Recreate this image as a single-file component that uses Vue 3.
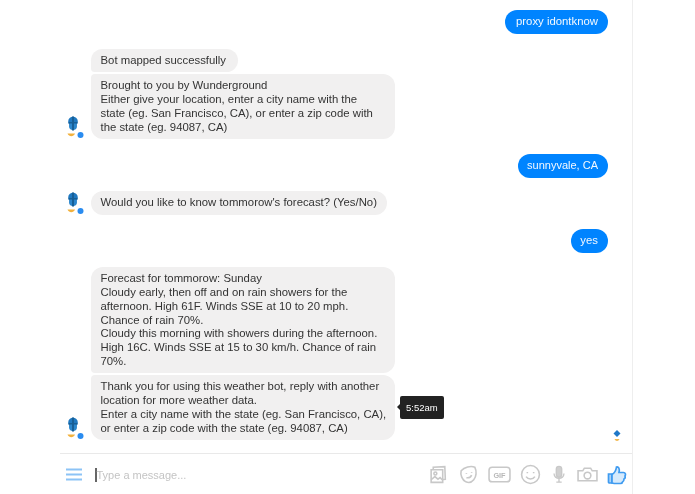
<template>
  <div class="messenger">
    <div class="chat">
      <div class="messages">
        <div class="row row-me">
          <div class="bubble me proxy">proxy idontknow</div>
        </div>

        <div class="row row-bot gap-first">
          <div class="avatar">
            <svg viewBox="0 0 20 24" class="bot-icon"><use href="#botmark" /></svg>
          </div>
          <div class="group">
            <div class="bubble bot top mapped">Bot mapped successfully</div>
            <div class="bubble bot bottom wide">
              Brought to you by Wunderground<br />
              Either give your location, enter a city name with the<br />
              state (eg. San Francisco, CA), or enter a zip code with<br />
              the state (eg. 94087, CA)
            </div>
          </div>
        </div>

        <div class="row row-me gap-sunny">
          <div class="bubble me small">sunnyvale, CA</div>
        </div>

        <div class="row row-bot gap-would">
          <div class="avatar">
            <svg viewBox="0 0 20 24" class="bot-icon"><use href="#botmark" /></svg>
          </div>
          <div class="bubble bot">Would you like to know tommorow's forecast? (Yes/No)</div>
        </div>

        <div class="row row-me gap-reply">
          <div class="bubble me">yes</div>
        </div>

        <div class="row row-bot gap-reply">
          <div class="avatar">
            <svg viewBox="0 0 20 24" class="bot-icon"><use href="#botmark" /></svg>
          </div>
          <div class="group">
            <div class="bubble bot top wide">
              Forecast for tommorow: Sunday<br />
              Cloudy early, then off and on rain showers for the<br />
              afternoon. High 61F. Winds SSE at 10 to 20 mph.<br />
              Chance of rain 70%.<br />
              Cloudy this morning with showers during the afternoon.<br />
              High 16C. Winds SSE at 15 to 30 km/h. Chance of rain<br />
              70%.
            </div>
            <div class="last-line">
              <div class="bubble bot bottom wide">
                Thank you for using this weather bot, reply with another<br />
                location for more weather data.<br />
                Enter a city name with the state (eg. San Francisco, CA),<br />
                or enter a zip code with the state (eg. 94087, CA)
              </div>
              <div class="tooltip">5:52am</div>
            </div>
          </div>
          <svg viewBox="0 0 10 14" class="seen">
            <path d="M5 1l3.500 3.500L5 8 1.500 4.500z" fill="#1f78c8" />
            <path d="M2.500 10c1 2.500 4 2.500 5 0z" fill="#f2b84d" />
          </svg>
        </div>
      </div>

      <div class="composer">
        <svg class="menu" viewBox="0 0 16 13">
          <path d="M0 1.500h16M0 6.500h16M0 11.500h16" stroke="#8cc3f6" stroke-width="1.900" fill="none" />
        </svg>
        <div class="input"><span class="caret"></span>Type a message...</div>
        <div class="tools">
          <svg viewBox="0 0 20 20" class="tool">
            <path d="M5 5.500V3l11-.5.500 12-2 .3M3 5.500h11v12H3z" />
            <circle cx="7" cy="9" r="1.400" />
            <path d="M3 15l3.500-3 3 2.500 2-1.500 2.500 2.500" />
          </svg>
          <svg viewBox="0 0 20 20" class="tool">
            <path d="M3 6.500C6 3 12 1.500 16 3c2 4 1.500 9-1 12-2 2.500-5 3-7.500 2C4 15.500 2 10 3 6.500z" />
            <path d="M8 8.500v.8M13 7.500v.8M8 13c2 .5 4-.5 5-2.500" />
          </svg>
          <svg viewBox="0 0 22 20" class="tool tool-gif">
            <rect x="1" y="3" width="20" height="14" rx="3" />
            <text x="11" y="13" text-anchor="middle">GIF</text>
          </svg>
          <svg viewBox="0 0 20 20" class="tool">
            <circle cx="10" cy="10" r="8.500" />
            <path d="M7 7.500v1.200M13 7.500v1.200M5.800 12c2 3 6.400 3 8.400 0" />
          </svg>
          <svg viewBox="0 0 20 20" class="tool tool-mic">
            <rect x="7" y="1" width="6" height="12" rx="3" fill="#d0d0d0" />
            <path d="M4.500 9c0 7 11 7 11 0M10 15v3.500M7 18.500h6" />
          </svg>
          <svg viewBox="0 0 20 20" class="tool">
            <path d="M1 6.500h4.500L7 4h6l1.500 2.500H19V16H1z" />
            <circle cx="10" cy="11" r="3.200" />
          </svg>
          <svg viewBox="0 0 20 20" class="thumb">
            <path d="M1.500 9h3.500v9H2.500a1 1 0 0 1-1-1z" fill="#a9d3f9" />
            <path d="M5 9.500c2.500-1.500 4-4 4.500-7.500 2-.5 3.500 1.500 2.500 5.500h4.500c2 0 2.500 2 1.500 3.500.5 1.500 0 2.500-1 3 0 1.500-.5 2.500-1.500 3-.2 1-1 1.500-2 1.500H8c-1.500 0-2-.5-3-.5z" />
          </svg>
        </div>
      </div>
    </div>

    <svg class="defs" width="0" height="0">
      <symbol id="botmark" viewBox="0 0 20 24">
        <circle cx="9" cy="6.500" r="4.800" fill="#1f78c0" />
        <circle cx="9" cy="11" r="4" fill="#2b86cc" />
        <rect x="8" y="1.500" width="2" height="14" fill="#175f96" />
        <rect x="4.500" y="7" width="9" height="1.500" fill="#175f96" />
        <path d="M3.500 18.500c1.500 3.500 6 3.500 7.500 0z" fill="#f2b13d" />
        <circle cx="16.500" cy="20" r="3" fill="#2a8cf0" />
      </symbol>
    </svg>
  </div>
</template>

<script setup>
// static screen, nothing to do here
</script>

<style>
html,
body {
  margin: 0;
  background: #fff;
}
</style>

<style scoped>
.messenger {
  width: 695px;
  height: 494px;
  overflow: hidden;
  background: #fff;
  font-family: "Liberation Sans", Arial, sans-serif;
  filter: blur(0.55px);
}

.chat {
  width: 632px;
  height: 494px;
  border-right: 1px solid #eeeeee;
  display: flex;
  flex-direction: column;
}

.messages {
  flex: 1;
  padding: 10px 24px 0 64px;
}

.row {
  display: flex;
  position: relative;
}

.row-me {
  justify-content: flex-end;
}

.row-bot {
  align-items: flex-end;
}

.gap-first {
  margin-top: 14.6px;
}

.gap-sunny {
  margin-top: 15px;
}

.gap-would {
  margin-top: 13px;
}

.gap-reply {
  margin-top: 14px;
}

.avatar {
  width: 27px;
  height: 24px;
  flex: none;
}

.bot-icon {
  width: 20px;
  height: 24px;
  display: block;
}

.group {
  display: flex;
  flex-direction: column;
  align-items: flex-start;
  gap: 2px;
}

.bubble {
  font-size: 11.35px;
  line-height: 13.9px;
  padding: 5px 10px 5px 9.5px;
  border-radius: 12px;
  box-sizing: border-box;
  white-space: nowrap;
}

.me {
  background: #0084ff;
  color: #f2f8ff;
}

.proxy {
  padding-left: 11px;
}

.small {
  font-size: 11px;
}

.bot {
  background: #f1f0f0;
  color: #333;
}

.mapped {
  padding-right: 12px;
}

.top {
  border-bottom-left-radius: 4px;
}

.bottom {
  border-top-left-radius: 4px;
}

.wide {
  width: 304px;
  padding-top: 5px;
  padding-bottom: 4px;
}

.last-line {
  display: flex;
  align-items: center;
}

.tooltip {
  background: #222;
  color: #fff;
  font-size: 9.5px;
  line-height: 12px;
  padding: 5.5px 6px;
  border-radius: 2px;
  margin-left: 5px;
  position: relative;
}

.tooltip::before {
  content: "";
  position: absolute;
  left: -3px;
  top: 8px;
  border-top: 3px solid transparent;
  border-bottom: 3px solid transparent;
  border-right: 3px solid #222;
}

.seen {
  position: absolute;
  right: -14px;
  bottom: -3px;
  width: 10px;
  height: 14px;
}

.composer {
  height: 41px;
  margin-left: 60px;
  border-top: 1px solid #e9e9e9;
  display: flex;
  align-items: center;
  padding: 1px 0 0 6px;
  box-sizing: border-box;
}

.menu {
  width: 16px;
  height: 13px;
  flex: none;
}

.input {
  flex: 1;
  margin-left: 13px;
  display: flex;
  align-items: center;
  font-size: 11px;
  color: #c4c4c4;
}

.caret {
  width: 1.5px;
  height: 14px;
  background: #666;
}

.tools {
  display: flex;
  align-items: center;
  gap: 9px;
  margin-right: 5px;
}

.tool {
  width: 21px;
  height: 21px;
  fill: none;
  stroke: #c8c8c8;
  stroke-width: 1.5;
}

.tool-gif {
  width: 23px;
}

.tool-mic {
  width: 18px;
}

.tool-gif text {
  font-size: 7px;
  font-weight: bold;
  fill: #b8b8b8;
  stroke: none;
}

.thumb {
  width: 20px;
  height: 20px;
  fill: #d6eafc;
  stroke: #3f9bf0;
  stroke-width: 1.7;
}

.defs {
  position: absolute;
}
</style>
